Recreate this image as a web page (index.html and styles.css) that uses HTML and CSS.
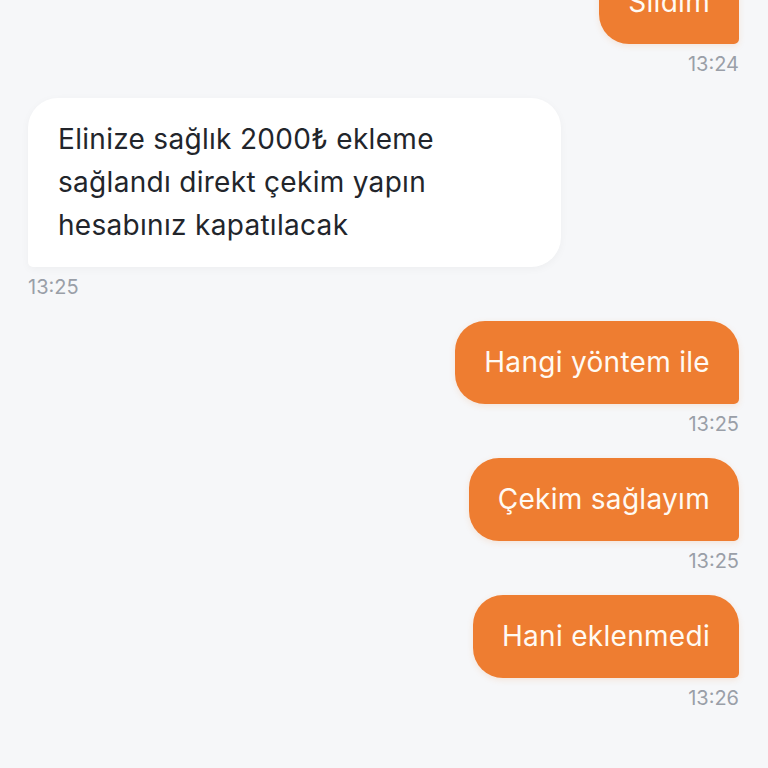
FILE: index.html
```html
<!DOCTYPE html>
<html lang="tr">
<head>
  <meta charset="UTF-8" />
  <meta name="viewport" content="width=device-width, initial-scale=1.0" />
  <title>Sohbet</title>
  <link rel="stylesheet" href="styles.css">
</head>
<body>
  <div class="chat">
    <div class="msg out">
      <div class="bubble">Sildim</div>
      <div class="time">13:24</div>
    </div>
    <div class="msg in">
      <div class="bubble">Elinize sağlık 2000₺ ekleme sağlandı direkt çekim yapın hesabınız kapatılacak</div>
      <div class="time">13:25</div>
    </div>
    <div class="msg out">
      <div class="bubble">Hangi yöntem ile</div>
      <div class="time">13:25</div>
    </div>
    <div class="msg out">
      <div class="bubble">Çekim sağlayım</div>
      <div class="time">13:25</div>
    </div>
    <div class="msg out">
      <div class="bubble">Hani eklenmedi</div>
      <div class="time">13:26</div>
    </div>
  </div>
</body>
</html>
```

FILE: styles.css
```css
* {
  box-sizing: border-box;
  margin: 0;
  padding: 0;
}

body {
  font-family: 'Inter', 'Noto Sans', sans-serif;
  background: #f6f7f9;
  color: #22252b;
  overflow: hidden;
}

.chat {
  display: flex;
  flex-direction: column;
  padding: 0 29px 0 28px;
  margin-top: -39px;
}

.msg {
  display: flex;
  flex-direction: column;
  margin-bottom: 23px;
}

.msg.out {
  align-items: flex-end;
}

.msg.in {
  align-items: flex-start;
}

.bubble {
  max-width: 533px;
  padding: 20px 29px;
  font-size: 28px;
  line-height: 43px;
  letter-spacing: 0.3px;
  border-radius: 30px;
}

.out .bubble {
  background: #ee7d31;
  color: #fffaf3;
  border-bottom-right-radius: 5px;
  box-shadow: 0 2px 6px rgba(238, 125, 49, 0.15);
}

.in .bubble {
  background: #fff;
  border-bottom-left-radius: 5px;
  padding: 20px 30px;
  box-shadow: 0 2px 8px rgba(0, 0, 0, 0.04);
}

.time {
  margin-top: 9px;
  font-size: 20px;
  line-height: 22px;
  color: #9a9fa8;
}
```
